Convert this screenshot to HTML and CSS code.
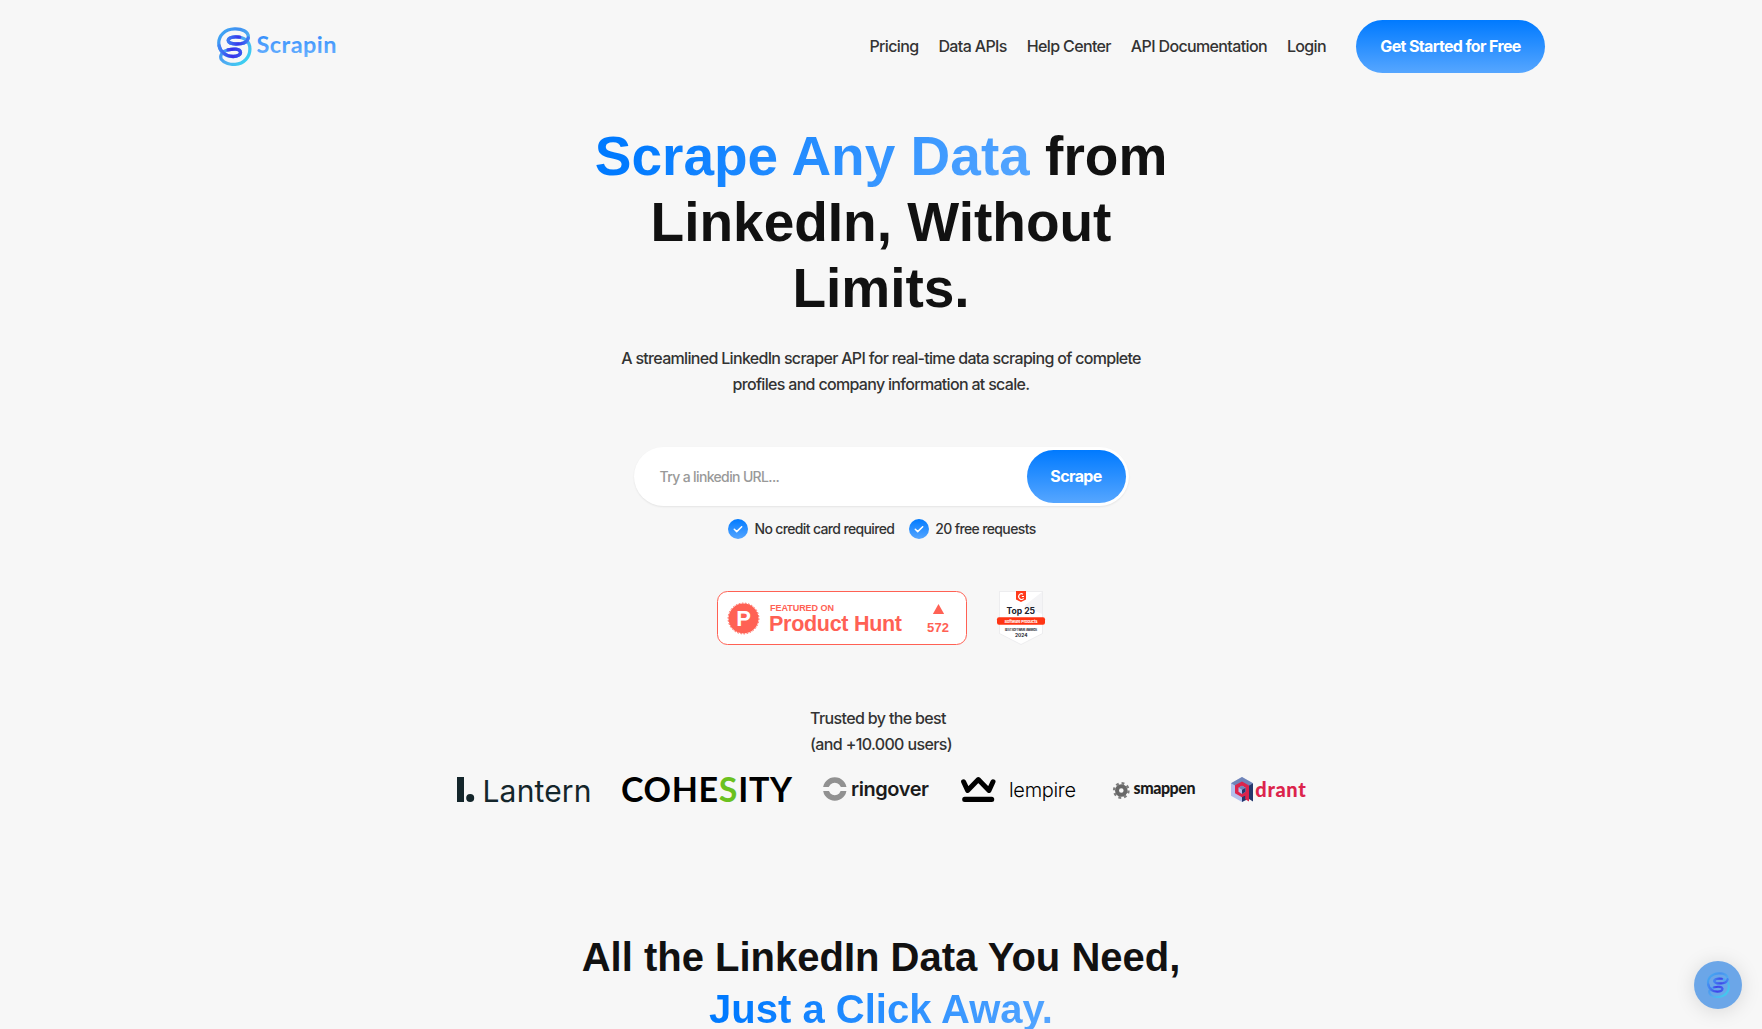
FILE: index.html
```html
<!DOCTYPE html>
<html lang="en">
<head>
<meta charset="utf-8">
<title>Scrapin</title>
<link rel="stylesheet" href="styles.css">
</head>
<body>
<svg class="defs" width="0" height="0" aria-hidden="true">
  <defs>
    <linearGradient id="ring" x1="0" y1="0" x2="1" y2="1"><stop offset="0" stop-color="#3fb0f5"/><stop offset=".3" stop-color="#3f8ff2"/><stop offset=".6" stop-color="#4fb0f2"/><stop offset="1" stop-color="#33dcf0"/></linearGradient>
    <linearGradient id="curlTop" x1="0" y1="0" x2="1" y2="0"><stop offset="0" stop-color="#3d7bf5"/><stop offset=".5" stop-color="#3a35ea"/><stop offset="1" stop-color="#3f7cf5"/></linearGradient>
    <linearGradient id="curlLow" x1="0" y1="0" x2="1" y2="0"><stop offset="0" stop-color="#3f86f5"/><stop offset=".6" stop-color="#3a30ea"/><stop offset="1" stop-color="#3d50ee"/></linearGradient>
    <linearGradient id="word" x1="0" y1="0" x2="0" y2="1"><stop offset="0" stop-color="#2b86fb"/><stop offset="1" stop-color="#6db4ff"/></linearGradient>
    <symbol id="swirl" viewBox="51 49 106 119">
      <g fill="none" stroke-width="10" stroke-linecap="round">
        <path stroke="url(#ring)" d="M146 82C148 62 125 54 104 55C74 56 56 76 56 98C56 124 76 139 100 139C114 139 124 133 122 125C120 115 100 115 84 119C66 124 58 136 64 148C72 160 92 164 106 163C134 161 151 140 151 116C151 94 134 78 106 79C92 80 84 84 85 91C87 101 108 102 124 100C136 98 144 92 146 82Z"/>
        <path stroke="url(#curlLow)" d="M57 106C62 128 80 139 100 139C114 139 124 133 122 125C120 115 100 115 84 119"/>
        <path stroke="url(#curlTop)" d="M120 80C98 77 84 82 85 91C87 101 108 102 124 100C136 98 144 92 146 82"/>
      </g>
    </symbol>
  </defs>
</svg>

<header class="header">
  <a class="brand">
    <svg class="brand-mark" width="35" height="39"><use href="#swirl"/></svg>
    <svg class="brand-word" width="82" height="34" viewBox="0 0 82 34"><text x="-.5" y="23.3" textLength="80" fill="url(#word)">Scrapin</text></svg>
  </a>
  <nav class="nav">
    <a>Pricing</a><a>Data APIs</a><a>Help Center</a><a>API Documentation</a><a>Login</a>
  </nav>
  <a class="button">Get Started for Free</a>
</header>

<main>
  <section class="hero">
    <h1><span class="accent">Scrape Any Data</span> from<br>LinkedIn, Without<br>Limits.</h1>
    <p class="lead">A streamlined LinkedIn scraper API for real-time data scraping of complete<br>profiles and company information at scale.</p>
    <form class="form">
      <span class="placeholder">Try a linkedin URL...</span>
      <span class="button">Scrape</span>
    </form>
    <ul class="perks">
      <li><svg width="20" height="20" viewBox="0 0 20 20"><path d="M6.3 10.3l2.4 2.3 5-4.9"/></svg>No credit card required</li>
      <li><svg width="20" height="20" viewBox="0 0 20 20"><path d="M6.3 10.3l2.4 2.3 5-4.9"/></svg>20 free requests</li>
    </ul>
    <div class="awards">
      <svg class="ph" width="250" height="54" viewBox="0 0 250 54">
        <rect x=".5" y=".5" width="249" height="53" rx="10" fill="#fff" stroke="#ff6154"/>
        <circle cx="26.5" cy="27.5" r="15" fill="#ff6154"/>
        <circle cx="26.5" cy="27.5" r="15.4" fill="none" stroke="#ff6154" stroke-dasharray="1.6 1.6"/>
        <text x="19.3" y="35" font-size="22" fill="#fff" textLength="16">P</text>
        <text x="53" y="20" font-size="9" textLength="64">FEATURED ON</text>
        <text x="52" y="40" font-size="21.5" textLength="133">Product Hunt</text>
        <path d="M221.5 13l5.6 10h-11.2z" fill="#ff6154"/>
        <text x="210" y="40.5" font-size="13" textLength="22">572</text>
      </svg>
      <svg class="g2" width="50" height="54" viewBox="0 0 50 54">
        <path d="M3.5.5h43v42L25 53.5 3.5 42.5z" fill="#fff" stroke="#e6e7ea" stroke-width=".7"/>
        <path d="M46 1v22L28 15z" fill="#f4f4f6"/>
        <path d="M20 0h10v8.6L25 11l-5-2.4z" fill="#ff3b1c"/>
        <path d="M27 3.2a2.8 2.8 0 1 0 .6 4.2M25.8 5.5h2.2" fill="none" stroke="#fff" stroke-width="1.1"/>
        <text x="10.5" y="23" font-size="8.6" textLength="28.5" fill="#20232e">Top 25</text>
        <rect x="1" y="26.3" width="48" height="7.4" rx="2" fill="#ff3514"/>
        <text x="8.5" y="31.6" font-size="4" textLength="33" fill="#fff">Software Products</text>
        <text x="9" y="39.6" font-size="2.8" textLength="32" fill="#20232e">BEST SOFTWARE AWARDS</text>
        <text x="19" y="46" font-size="4.8" textLength="12.5" fill="#20232e">2024</text>
      </svg>
    </div>
    <p class="trusted">Trusted by the best<br>(and +10.000 users)</p>
    <div class="logos">
      <svg width="134" height="32" viewBox="0 0 134 32" fill="#14262b">
        <rect x="0" y="3" width="7" height="25"/><circle cx="13.2" cy="24" r="4"/>
        <text class="lantern" x="25.5" y="27.6" textLength="109">Lantern</text>
      </svg>
      <svg width="170" height="32" viewBox="0 0 170 32">
        <text class="cohesity" x="-1" y="27.7" textLength="171">COHE<tspan fill="#6bc11f">S</tspan>ITY</text>
      </svg>
      <svg width="107" height="32" viewBox="0 0 107 32">
        <circle cx="11.8" cy="15" r="9" fill="none" stroke="#919191" stroke-width="5.6"/>
        <rect x="-1" y="13" width="26" height="4" fill="#f7f7f7"/>
        <text class="ringover" x="28" y="22" textLength="78">ringover</text>
      </svg>
      <svg width="116" height="32" viewBox="0 0 116 32">
        <path d="M2.6 7.8l4 8.6L17.3 5.6 28 16.4l4-8.6" fill="none" stroke="#000" stroke-width="5" stroke-linecap="round" stroke-linejoin="round"/>
        <rect x="1.2" y="22.8" width="32" height="5.1" rx="2.5"/>
        <text class="lempire" x="48" y="23" textLength="67">lempire</text>
      </svg>
      <svg class="narrow" width="83" height="32" viewBox="0 0 83 32">
        <circle cx="8.3" cy="16.5" r="4.3" fill="none" stroke="#686868" stroke-width="4"/>
        <circle cx="8.3" cy="16.5" r="7.2" fill="none" stroke="#7d7d7d" stroke-width="2.4" stroke-dasharray="2.83 2.83"/>
        <text class="smappen" x="20.5" y="20.3" textLength="62">smappen</text>
      </svg>
      <svg class="narrow" width="76" height="32" viewBox="0 0 76 32">
        <path d="M11 3l11 6.3v13L11 28 0 21.7V9.3z" fill="#b4c1ee"/>
        <path d="M11 3l11 6.3-11 6L0 9.3z" fill="#7085b8"/>
        <path d="M22 9.3v18.2l-4-2.5V11.6z" fill="#24386c"/>
        <path d="M11 22l4-1v5l-4 2z" fill="#24386c"/>
        <path d="M11 7.4l7 4v16l-3.8-2.2v-3.6L11 23.2l-7-4v-8z" fill="#dc244c"/>
        <path d="M11 11.8l3.5 2v4L11 20l-3.5-2.2v-4z" fill="#b4c1ee"/>
        <path d="M11 11.8l3.5 2-3.5 2-3.5-2z" fill="#7085b8"/>
        <path d="M11 15.8l3.5-2v4L11 20z" fill="#24386c"/>
        <text class="qdrant" x="24.3" y="23.2" textLength="50.5">drant</text>
      </svg>
    </div>
  </section>
  <section class="data">
    <h2>All the LinkedIn Data You Need,<br><span class="accent">Just a Click Away.</span></h2>
  </section>
</main>

<a class="chat"><svg width="25" height="26"><use href="#swirl"/></svg></a>
</body>
</html>
```
FILE: styles.css
```css
* { box-sizing: border-box; }
body {
  margin: 0;
  height: 1029px;
  overflow: hidden;
  background: #f7f7f7;
  color: #333;
  font: 500 16px/25.6px Inter, "Liberation Sans", sans-serif;
  letter-spacing: -.64px;
}
svg { overflow: visible; letter-spacing: 0; }
.defs { position: absolute; }
.header {
  display: flex;
  align-items: center;
  height: 93px;
  padding: 0 217px;
}
.brand { display: flex; align-items: center; gap: 5px; margin-right: auto; }
.brand-word { font: 700 23.5px Lato, sans-serif; }
.nav { display: flex; gap: 20px; margin-right: 30px; }
.button {
  display: flex;
  align-items: center;
  justify-content: center;
  height: 53px;
  padding: 0 24px;
  border-radius: 27px;
  background: linear-gradient(#007aff, #56a6ff);
  color: #fff;
  font-weight: 700;
}
.header .button { width: 189px; padding: 0; }
.hero { display: flex; flex-direction: column; align-items: center; padding-top: 30px; }
h1, h2 {
  margin: 0;
  color: #111;
  font-family: "Liberation Sans", Arial, sans-serif;
  font-weight: 700;
  letter-spacing: 0;
  text-align: center;
}
h1 { font-size: 55px; line-height: 66px; }
h2 { font-size: 40px; line-height: 52px; }
.accent {
  background: linear-gradient(120deg, #007aff 10%, #56a6ff);
  -webkit-background-clip: text;
  background-clip: text;
  color: transparent;
}
.lead { margin: 25px 0 0; text-align: center; letter-spacing: -.685px; }
.form {
  display: flex;
  align-items: center;
  justify-content: space-between;
  width: 495px;
  height: 59px;
  margin: 50px 0 0;
  padding: 0 3px 0 26px;
  border-radius: 30px;
  background: #fff;
  box-shadow: 0 1px 2px rgba(0, 0, 0, .08);
}
.form .button { width: 99px; padding: 0; }
.placeholder { color: #999; font-size: 14px; }
.perks {
  display: flex;
  gap: 15px;
  margin: 13px 0 0;
  padding: 0 0 0 2px;
  list-style: none;
  font-size: 14px;
  line-height: 20px;
}
.perks li { display: flex; gap: 6px; }
.perks svg {
  border-radius: 50%;
  background: linear-gradient(#007aff, #56a6ff);
  fill: none;
  stroke: #fff;
  stroke-width: 1.5;
  stroke-linecap: round;
  stroke-linejoin: round;
}
.awards { display: flex; gap: 29px; margin-top: 52px; }
.ph { font: 700 12px "Liberation Sans", Arial, sans-serif; fill: #ff6154; }
.g2 { font-family: Inter, sans-serif; font-weight: 700; }
.trusted { margin: 61px 0 0; }
.logos { display: flex; gap: 31px; margin-top: 16.4px; padding-left: 2px; }
.logos .narrow { margin-left: 4.5px; }
.lantern { font: 400 30px Inter, sans-serif; }
.cohesity { font: 700 34px Lato, sans-serif; }
.ringover { font: 600 20px Inter, sans-serif; fill: #1b1b1b; }
.lempire { font: 300 20px Inter, sans-serif; }
.smappen { font: 900 16px Lato, sans-serif; fill: #1b1b1b; }
.qdrant { font: 900 20px Lato, sans-serif; fill: #dc244c; }
.data { margin-top: 125.6px; }
.chat {
  position: fixed;
  right: 20px;
  bottom: 20px;
  display: grid;
  place-items: center;
  width: 48px;
  height: 48px;
  border-radius: 50%;
  background: #6ba6e8;
  box-shadow: 0 2px 20px rgba(0, 0, 0, .13);
}
.chat svg { opacity: .85; }
```
